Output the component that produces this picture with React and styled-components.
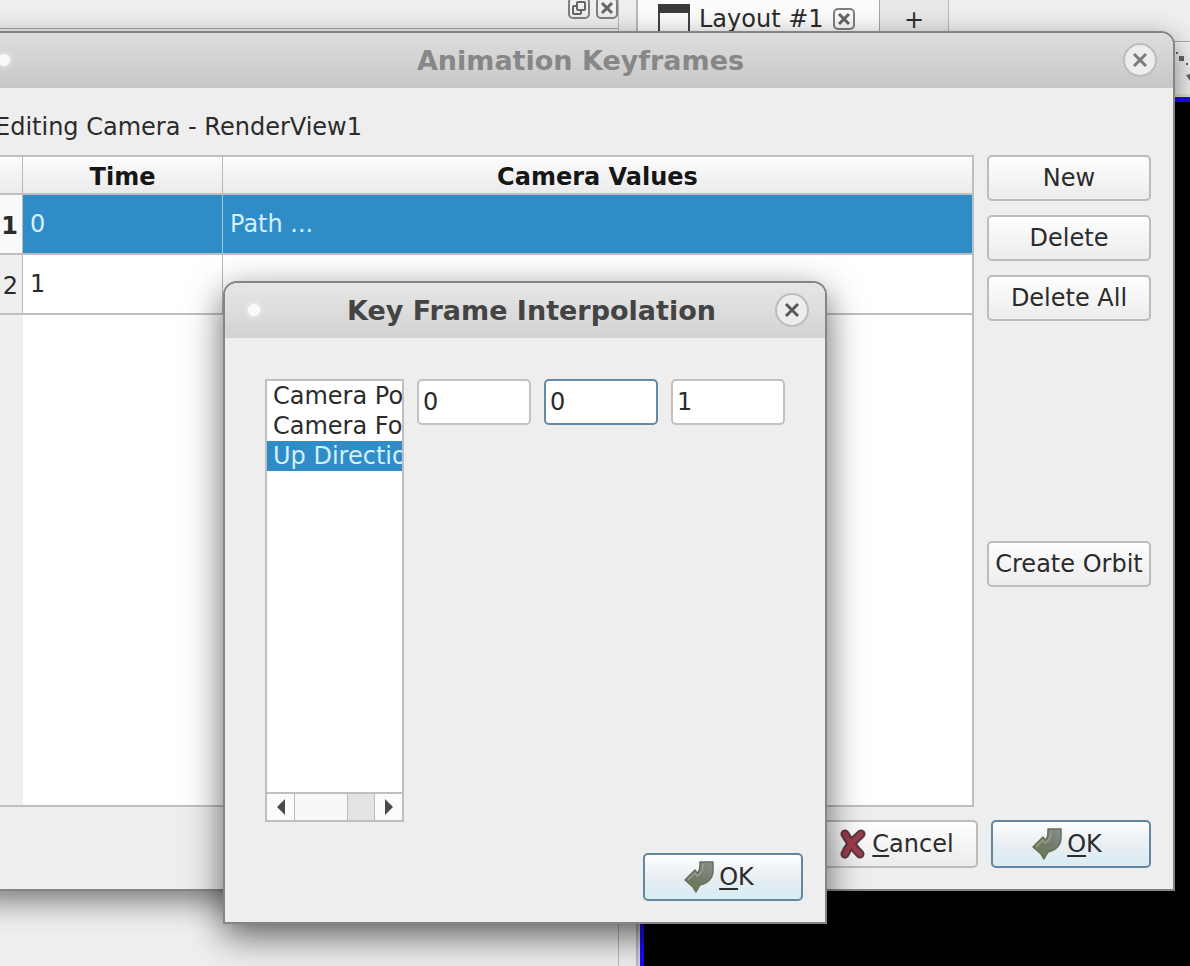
import React from "react";
import styled, { createGlobalStyle, css } from "styled-components";

const GlobalStyle = createGlobalStyle`
  *, *::before, *::after { box-sizing: border-box; }
  html, body { margin: 0; overflow: hidden; background: #eee; }
  body, button, input, table {
    font-family: "DejaVu Sans", sans-serif;
    font-size: 24px;
    line-height: 30px;
    color: #2b2b2b;
  }
`;

/* ---------- desktop ---------- */

const Desktop = styled.main`
  position: relative;
  display: grid;
  grid-template-columns: 619px 17px minmax(0, 1fr);
  height: 100vh;
  overflow: hidden;
  background: #eee;
`;

const Dock = styled.section`
  border-right: 1px solid #b4b4c4;
  background: #efefef;
`;

const DockHeader = styled.header`
  display: flex;
  justify-content: flex-end;
  gap: 6px;
  height: 29px;
  border-bottom: 1px solid #a4a4a4;
`;

const SquareButton = styled.button`
  display: block;
  width: 22px;
  height: 22px;
  padding: 0;
  border: 0;
  background: none;
  svg { display: block; }
`;

const DockButton = styled(SquareButton)`
  margin-top: -3px;
`;

const ViewArea = styled.section`
  display: flex;
  flex-direction: column;
  border-left: 2px solid #b4bcb4;
  background: #d4d4ee;
`;

const TabBar = styled.nav`
  display: flex;
  height: 42px;
  border-bottom: 1px solid #aaa;
  background: #efefef;
`;

const Tab = styled.div`
  display: flex;
  align-items: center;
  gap: 9px;
  width: 242px;
  padding: 0 20px 4px;
  border-right: 1px solid #a5a5a5;
  background: #fcfcfc;
  white-space: nowrap;
  svg { flex: none; }
`;

const AddTab = styled.button`
  width: 69px;
  padding: 0 0 2px;
  border: 0;
  border-right: 1px solid #b9b9b9;
  background: #e9e9e9;
`;

const ViewToolbar = styled.div`
  display: flex;
  justify-content: flex-end;
  height: 55px;
  border-bottom: 3px solid #dfe8cf;
  background: #f2f2f2;
`;

const RenderView = styled.div`
  flex: 1;
  margin-left: 2px;
  border-top: 5px solid #1a0cf0;
  border-left: 4px solid #1a0cf0;
  background: #000;
`;

/* ---------- windows ---------- */

const Window = styled.section`
  position: absolute;
  border: 2px solid #858585;
  border-radius: 14px 14px 0 0;
  background: #eee;
`;

const KeyframesWindow = styled(Window)`
  top: 31px;
  left: -27px;
  right: 15px;
  box-shadow: 0 10px 30px rgba(0, 0, 0, 0.5);
`;

const InterpolationWindow = styled(Window)`
  top: 281px;
  left: 223px;
  width: 604px;
  box-shadow: 0 12px 36px rgba(0, 0, 0, 0.6);
`;

const TitleBar = styled.header`
  display: flex;
  align-items: center;
  height: 55px;
  padding: 0 16px 2px 13px;
  border-radius: 12px 12px 0 0;
  background: ${(p) =>
    p.$active
      ? "linear-gradient(#e6e6e6, #d3d3d3)"
      : "linear-gradient(#dedede, #c7c7c7)"};
`;

const Title = styled.h1`
  flex: 1;
  margin: 0;
  padding: 2px 0 0 18px;
  font-size: 27px;
  line-height: 32px;
  text-align: center;
  white-space: nowrap;
  color: ${(p) => (p.$active ? "#444" : "#878787")};
`;

const MenuDot = styled.button`
  display: grid;
  place-items: center;
  width: 32px;
  height: 32px;
  padding: 0;
  border: 0;
  background: none;
  &::before {
    content: "";
    width: 12px;
    height: 12px;
    border-radius: 50%;
    background: #fafafa;
    box-shadow: 0 0 4px 2px rgba(255, 255, 255, 0.4);
  }
`;

const RoundClose = styled.button`
  display: grid;
  place-items: center;
  width: 34px;
  height: 34px;
  padding: 0;
  border: 2px solid #bcbcbc;
  border-radius: 50%;
  background: #ededed;
`;

const PushButton = styled.button`
  display: flex;
  align-items: center;
  justify-content: center;
  gap: 4px;
  width: 100%;
  height: 46px;
  padding: 0;
  border: 2px solid #bcbcbc;
  border-radius: 5px;
  background: linear-gradient(#fefefe, #ececec);
  white-space: nowrap;
  svg { flex: none; }
  ${(p) =>
    p.$dialog &&
    css`
      width: 160px;
      height: 48px;
      padding-right: 2px;
    `}
  ${(p) =>
    p.$primary &&
    css`
      padding-right: 9px;
      border-color: #64879d;
      background: linear-gradient(#fdfeff, #e9eef2 50%, #d8ecf4);
    `}
`;

const Mnemonic = styled.span`
  text-decoration: underline;
  text-decoration-thickness: 2px;
  text-underline-offset: 3px;
  text-decoration-skip-ink: none;
`;

const DialogButtons = styled.footer`
  display: flex;
  justify-content: flex-end;
  gap: 13px;
`;

/* ---------- keyframes window ---------- */

const KeyframesBody = styled.div`
  display: grid;
  grid-template-columns: minmax(0, 1fr) 164px;
  column-gap: 13px;
  padding: 24px 22px 21px 21px;
`;

const Subject = styled.p`
  grid-column: 1 / -1;
  margin: 0 0 13px -1px;
`;

const TableFrame = styled.div`
  min-height: 652px;
  border: 2px solid #bfbfbf;
  border-left: 0;
  background: linear-gradient(to right, #efefef 27px, #fff 27px);
`;

const Table = styled.table`
  width: 100%;
  table-layout: fixed;
  border-collapse: separate;
  border-spacing: 0;
  th, td {
    padding: 0;
    border-right: 1px solid #b9b9b9;
    border-bottom: 2px solid #bfbfbf;
  }
  thead th {
    height: 38px;
    padding-top: 4px;
    background: linear-gradient(#fcfcfc, #ebebeb);
    color: #161616;
  }
  td {
    height: 60px;
    padding-left: 7px;
    white-space: nowrap;
  }
  tr > :last-child { border-right: 0; }
`;

const NumberCol = styled.col`
  width: 27px;
`;

const TimeCol = styled.col`
  width: 200px;
`;

const RowHead = styled.th`
  font-weight: ${(p) => (p.$current ? 700 : 400)};
  text-align: right;
  && { padding-right: 4px; padding-top: 4px; }
  background: ${(p) => (p.$current ? "#f9f9f9" : "#efefef")};
`;

const Row = styled.tr`
  ${(p) =>
    p.$selected &&
    css`
      td {
        background: #308cc6;
        border-right-color: #9ccbe6;
        color: #d2f0ff;
      }
    `}
`;

const Actions = styled.div`
  display: flex;
  flex-direction: column;
  gap: 14px;
`;

const Centered = styled.div`
  margin: auto 0;
  padding-bottom: 14px;
`;

const KeyframesFooter = styled(DialogButtons)`
  grid-column: 1 / -1;
  margin-top: 13px;
`;

/* ---------- interpolation window ---------- */

const InterpolationBody = styled.div`
  padding: 41px 22px 21px;
`;

const Editor = styled.div`
  display: grid;
  grid-template-columns: 139px minmax(0, 1fr);
  gap: 13px;
  margin: 0 18px 31px 18px;
`;

const ListFrame = styled.div`
  display: flex;
  flex-direction: column;
  min-height: 443px;
  border: 2px solid #bfbfbf;
  background: #fff;
`;

const List = styled.ul`
  flex: 1;
  margin: 0;
  padding: 0;
  overflow: hidden;
  list-style: none;
`;

const ListItem = styled.li`
  padding-left: 6px;
  overflow: hidden;
  white-space: nowrap;
  ${(p) =>
    p.$selected &&
    css`
      background: #308cc6;
      color: #d2f0ff;
    `}
`;

const ScrollBar = styled.div`
  display: grid;
  grid-template-columns: 27px minmax(0, 1fr) 27px;
  height: 28px;
  border-top: 2px solid #bfbfbf;
`;

const ScrollArrow = styled.button`
  display: grid;
  place-items: center;
  padding: 0;
  border: 0;
  background: #fbfbfb;
`;

const Track = styled.div`
  padding-right: 26px;
  border: 1px solid #bababa;
  border-width: 0 1px;
  background: #e3e3e3;
`;

const Thumb = styled.div`
  height: 100%;
  border-right: 1px solid #bababa;
  background: #f8f8f8;
`;

const Fields = styled.div`
  display: grid;
  grid-template-columns: repeat(3, minmax(0, 1fr));
  gap: 13px;
  align-content: start;
`;

const Field = styled.input`
  width: 100%;
  height: 46px;
  padding: 0 4px;
  border: 2px solid ${(p) => (p.$focused ? "#6489a6" : "#c2c2c2")};
  border-radius: 5px;
  outline: none;
  background: #fff;
`;

/* ---------- icons ---------- */

const BoxIcon = ({ children }) => (
  <svg width="22" height="22" viewBox="0 0 22 22" fill="none" stroke="#666" strokeWidth="2">
    <rect x="1" y="1" width="20" height="20" rx="4" stroke="#808080" />
    {children}
  </svg>
);

const BoxCloseIcon = () => (
  <BoxIcon>
    <path d="M6 6l10 10M16 6L6 16" strokeWidth="3" />
  </BoxIcon>
);

const FloatIcon = () => (
  <BoxIcon>
    <rect x="9" y="5" width="8" height="8" rx="1" />
    <path d="M9 9H6a1 1 0 0 0-1 1v6a1 1 0 0 0 1 1h6a1 1 0 0 0 1-1v-3" />
  </BoxIcon>
);

const LayoutIcon = () => (
  <svg width="32" height="30" viewBox="0 0 32 30">
    <rect x="1" y="1" width="30" height="28" fill="#fcfcfc" stroke="#444" strokeWidth="2" />
    <rect width="32" height="9" fill="#3b3b3b" />
  </svg>
);

const CrossIcon = ({ color }) => (
  <svg width="16" height="16" viewBox="0 0 16 16">
    <path d="M2 2l12 12M14 2L2 14" stroke={color} strokeWidth="3" />
  </svg>
);

const AcceptIcon = () => (
  <svg width="32" height="32" viewBox="0 0 32 32">
    <defs>
      <linearGradient id="accept" x1="1" y1="0" x2="0.2" y2="1">
        <stop offset="0" stopColor="#86908a" />
        <stop offset="0.5" stopColor="#727b6c" />
        <stop offset="1" stopColor="#6e7a4c" />
      </linearGradient>
    </defs>
    <path
      d="M17 1H30V9C30 17 25 22 17 24L13 31L10 26L2 19L12 9L14 12C17 10 17 7 17 1Z"
      fill="url(#accept)"
      stroke="#66705a"
      strokeWidth="1.5"
      strokeLinejoin="round"
    />
    <path d="M5 19L12 12L14 15C19 13 20 9 20 3" fill="none" stroke="#98a08f" strokeWidth="1.5" />
  </svg>
);

const RejectIcon = () => (
  <svg width="28" height="32" viewBox="0 0 28 32" fill="none" strokeLinecap="round">
    <g stroke="#553a40" strokeWidth="9">
      <path d="M5 6C9 13 14 20 20 26" />
      <path d="M21 6C14 12 8 19 5 26" />
    </g>
    <g stroke="#a03c4a" strokeWidth="5">
      <path d="M5 6C9 13 14 20 20 26" />
      <path d="M21 6C14 12 8 19 5 26" />
    </g>
  </svg>
);

const Arrow = ({ left }) => (
  <svg width="10" height="16" viewBox="0 0 10 16">
    <path d={left ? "M9 0V16L1 8Z" : "M1 0V16L9 8Z"} fill="#4a4a4a" />
  </svg>
);

const ViewTools = () => (
  <svg width="16" height="55" viewBox="0 0 16 55" fill="#666">
    <path d="M5 14h5v5h-5zM12 33l4-1v7zM2 10h2v2h-2zM12 21h2v2h-2z" />
  </svg>
);

/* ---------- parts ---------- */

const OkButton = () => (
  <PushButton $dialog $primary>
    <AcceptIcon />
    <span>
      <Mnemonic>O</Mnemonic>K
    </span>
  </PushButton>
);

const WindowTitle = ({ active, children }) => (
  <TitleBar $active={active}>
    <MenuDot aria-label="Window menu" />
    <Title $active={active}>{children}</Title>
    <RoundClose aria-label="Close window">
      <CrossIcon color={active ? "#5a5a5a" : "#7c7c7c"} />
    </RoundClose>
  </TitleBar>
);

const keyframes = [
  { time: "0", value: "Path ..." },
  { time: "1", value: "" },
];

const properties = ["Camera Position", "Camera Focus", "Up Direction"];

const upDirection = [
  { axis: "X", value: "0" },
  { axis: "Y", value: "0" },
  { axis: "Z", value: "1" },
];

export default function App() {
  return (
    <>
      <GlobalStyle />
      <Desktop>
        <Dock>
          <DockHeader>
            <DockButton aria-label="Float panel">
              <FloatIcon />
            </DockButton>
            <DockButton aria-label="Close panel">
              <BoxCloseIcon />
            </DockButton>
          </DockHeader>
        </Dock>
        <div />
        <ViewArea>
          <TabBar>
            <Tab>
              <LayoutIcon />
              <span>Layout #1</span>
              <SquareButton aria-label="Close tab">
                <BoxCloseIcon />
              </SquareButton>
            </Tab>
            <AddTab aria-label="Add layout">+</AddTab>
          </TabBar>
          <ViewToolbar>
            <ViewTools />
          </ViewToolbar>
          <RenderView />
        </ViewArea>

        <KeyframesWindow>
          <WindowTitle>Animation Keyframes</WindowTitle>
          <KeyframesBody>
            <Subject>Editing Camera - RenderView1</Subject>
            <TableFrame>
              <Table>
                <colgroup>
                  <NumberCol />
                  <TimeCol />
                  <col />
                </colgroup>
                <thead>
                  <tr>
                    <th aria-label="Row" />
                    <th>Time</th>
                    <th>Camera Values</th>
                  </tr>
                </thead>
                <tbody>
                  {keyframes.map((k, i) => (
                    <Row key={k.time} $selected={i === 0}>
                      <RowHead scope="row" $current={i === 0}>
                        {i + 1}
                      </RowHead>
                      <td>{k.time}</td>
                      <td>{k.value}</td>
                    </Row>
                  ))}
                </tbody>
              </Table>
            </TableFrame>
            <Actions>
              <PushButton>New</PushButton>
              <PushButton>Delete</PushButton>
              <PushButton>Delete All</PushButton>
              <Centered>
                <PushButton>Create Orbit</PushButton>
              </Centered>
            </Actions>
            <KeyframesFooter>
              <PushButton $dialog>
                <RejectIcon />
                <span>
                  <Mnemonic>C</Mnemonic>ancel
                </span>
              </PushButton>
              <OkButton />
            </KeyframesFooter>
          </KeyframesBody>
        </KeyframesWindow>

        <InterpolationWindow>
          <WindowTitle active>Key Frame Interpolation</WindowTitle>
          <InterpolationBody>
            <Editor>
              <ListFrame>
                <List role="listbox" aria-label="Camera property">
                  {properties.map((name, i) => (
                    <ListItem key={name} role="option" aria-selected={i === 2} $selected={i === 2}>
                      {name}
                    </ListItem>
                  ))}
                </List>
                <ScrollBar>
                  <ScrollArrow aria-label="Scroll left">
                    <Arrow left />
                  </ScrollArrow>
                  <Track>
                    <Thumb />
                  </Track>
                  <ScrollArrow aria-label="Scroll right">
                    <Arrow />
                  </ScrollArrow>
                </ScrollBar>
              </ListFrame>
              <Fields>
                {upDirection.map(({ axis, value }) => (
                  <Field
                    key={axis}
                    aria-label={`Up direction ${axis}`}
                    defaultValue={value}
                    $focused={axis === "Y"}
                  />
                ))}
              </Fields>
            </Editor>
            <DialogButtons>
              <OkButton />
            </DialogButtons>
          </InterpolationBody>
        </InterpolationWindow>
      </Desktop>
    </>
  );
}
